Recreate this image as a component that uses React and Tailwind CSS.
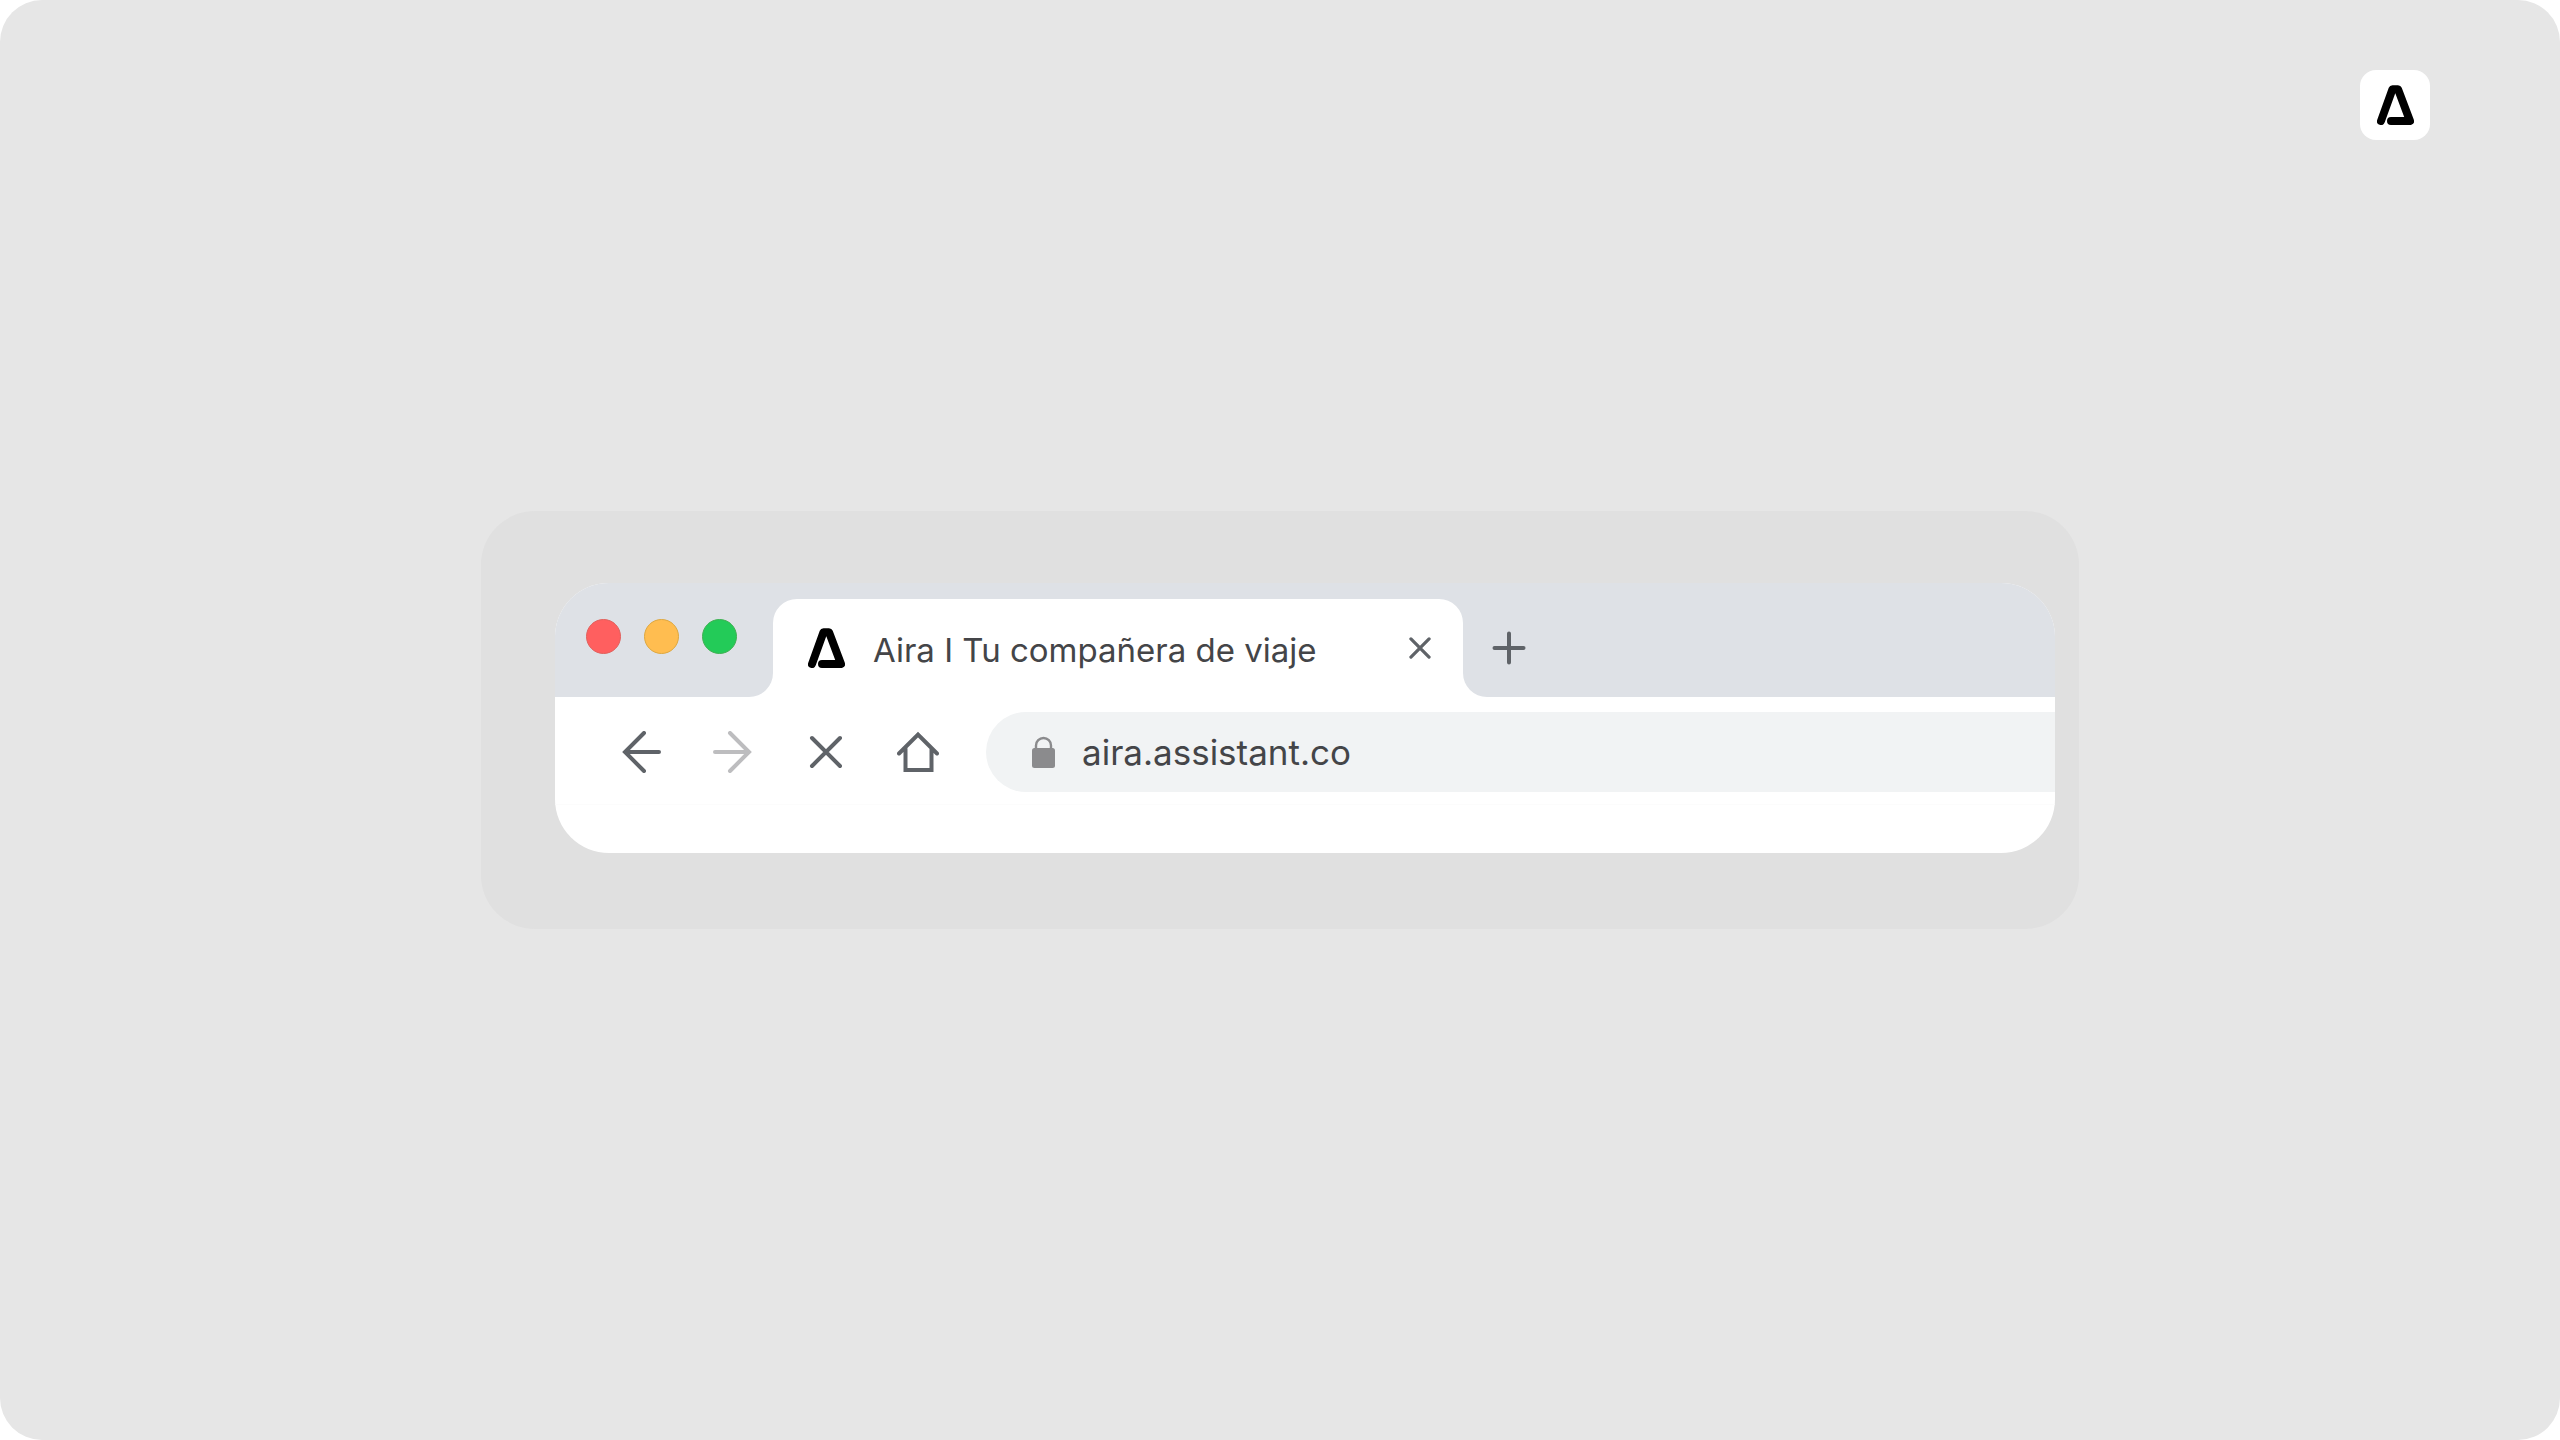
import React from 'react';

export default function App() {
    return (
        <div className="grid min-h-screen grid-rows-[1fr_auto_1fr] rounded-[42px] bg-[#e6e6e6] font-['Inter',sans-serif]">
            <header className="flex items-start justify-end pt-[70px] pr-[130px]">
                <a href="#" aria-label="Aira" className="flex size-[70px] items-center justify-center rounded-2xl bg-white">
                    <AiraLogo className="h-10 w-[37px]" />
                </a>
            </header>

            <main className="mx-auto w-full max-w-[1598px] rounded-[54px] bg-[#e0e0e0] pt-[72px] pr-6 pb-[76px] pl-[74px]">
                <div className="overflow-hidden rounded-[54px] bg-white">
                    <TabStrip title="Aira I Tu compañera de viaje" />
                    <Toolbar url="aira.assistant.co" />
                    <div className="h-12" />
                </div>
            </main>
        </div>
    );
}

function TabStrip({ title }) {
    return (
        <div>
            <div className="h-4 bg-[#dee1e6]" />
            <div className="flex h-[98px]">
                <div className="flex w-[218px] items-start gap-[23px] rounded-br-3xl bg-[#dee1e6] pt-5 pl-[31px]">
                    <button aria-label="Cerrar ventana" className="size-[35px] rounded-full border border-[#e0605c] bg-[#ff5f5f]" />
                    <button aria-label="Minimizar" className="size-[35px] rounded-full border border-[#dda73f] bg-[#ffbd50]" />
                    <button aria-label="Maximizar" className="size-[35px] rounded-full border border-[#3fb052] bg-[#23cb58]" />
                </div>
                <div className="w-[690px] bg-[#dee1e6]">
                    <div className="flex h-full items-center rounded-t-3xl bg-white pr-8 pl-[35px]">
                        <AiraLogo className="h-10 w-[37px]" />
                        <span className="ml-7 flex-1 pt-1 text-[33px] leading-10 whitespace-nowrap text-[#444548]">{title}</span>
                        <button aria-label="Cerrar pestaña" className="text-[#5f6368]">
                            <Cross className="size-[22px]" strokeWidth="5" />
                        </button>
                    </div>
                </div>
                <div className="flex flex-1 items-center rounded-bl-3xl bg-[#dee1e6] pl-[29px]">
                    <button aria-label="Nueva pestaña" className="text-[#5f6368]">
                        <Icon className="size-[34px]" viewBox="0 0 34 34">
                            <path d="M17 2.5v29M2.5 17h29" />
                        </Icon>
                    </button>
                </div>
            </div>
        </div>
    );
}

function Toolbar({ url }) {
    return (
        <div className="flex items-center border-b border-[#fcfcfc] pt-[15px] pb-3 pl-[66px]">
            <nav className="flex items-center gap-[50px] text-[#5f6368]">
                <button aria-label="Atrás">
                    <Icon className="size-[42px]" viewBox="0 0 42 42">
                        <path d="M38 21H4M23 2L4 21l19 19" />
                    </Icon>
                </button>
                <button aria-label="Adelante" className="text-[#bdbdbf]">
                    <Icon className="size-[42px]" viewBox="0 0 42 42">
                        <path d="M2 21h34M17 2l19 19-19 19" />
                    </Icon>
                </button>
                <button aria-label="Detener" className="flex w-[42px] justify-center">
                    <Cross className="size-[34px]" strokeWidth="4" />
                </button>
                <button aria-label="Inicio">
                    <Icon className="size-[42px]" viewBox="0 0 42 42">
                        <path d="M2 22.500L21 3.500l19 19M8.500 17.500V39h26V17.500" />
                    </Icon>
                </button>
            </nav>
            <label className="ml-[47px] flex h-20 flex-1 items-center gap-[27px] rounded-l-full bg-[#f1f3f4] pl-[46px]">
                <svg viewBox="0 0 23 32" className="h-8 w-[23px]" aria-hidden="true">
                    <path d="M4 13V9.500a7.500 7.500 0 0 1 15 0V13" fill="none" stroke="#8b8b8d" strokeWidth="2.400" />
                    <rect y="12" width="23" height="20" rx="2.500" fill="#8b8b8d" />
                </svg>
                <input
                    type="text"
                    aria-label="Dirección"
                    defaultValue={url}
                    className="w-full flex-1 bg-transparent text-[35px] leading-10 text-[#444548] outline-none"
                />
            </label>
        </div>
    );
}

function AiraLogo({ className }) {
    return (
        <svg viewBox="0 0 37 40" className={className} aria-hidden="true">
            <path
                d="M4 36L15.500 4.200h5.500L33 36H14"
                fill="none"
                stroke="#000"
                strokeWidth="8"
                strokeLinecap="round"
                strokeLinejoin="round"
            />
        </svg>
    );
}

function Icon({ className, viewBox, strokeWidth = '4', children }) {
    return (
        <svg
            viewBox={viewBox}
            className={className}
            fill="none"
            stroke="currentColor"
            strokeWidth={strokeWidth}
            strokeLinecap="round"
            aria-hidden="true"
        >
            {children}
        </svg>
    );
}

function Cross({ className, strokeWidth }) {
    return (
        <Icon className={className} viewBox="0 0 34 34" strokeWidth={strokeWidth}>
            <path d="M3 3l28 28M31 3L3 31" />
        </Icon>
    );
}
